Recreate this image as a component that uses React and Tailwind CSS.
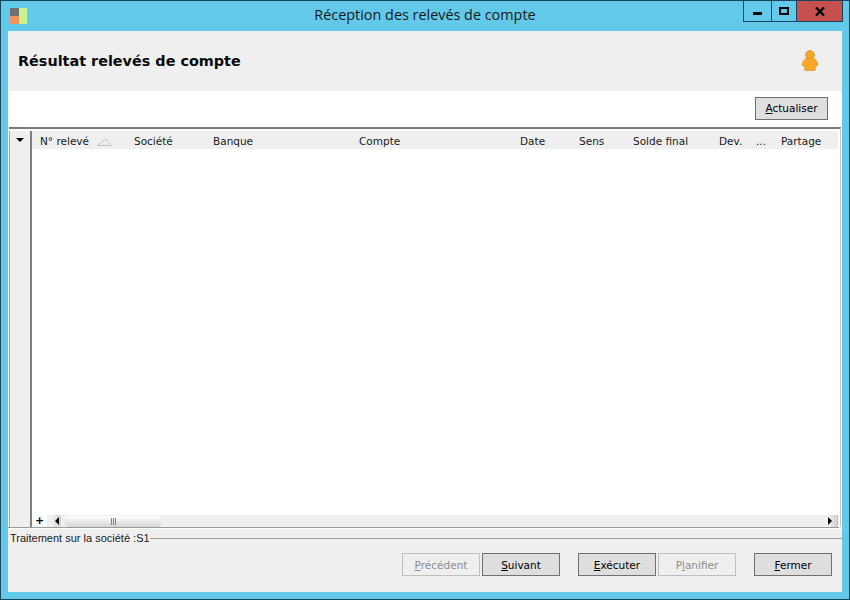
import React from "react";

const FONT = "font-['DejaVu_Sans',sans-serif]";

const columns = [
  { label: "Société", w: "w-[79px]" },
  { label: "Banque", w: "w-[146px]" },
  { label: "Compte", w: "w-[161px]" },
  { label: "Date", w: "w-[59px]" },
  { label: "Sens", w: "w-[54px]" },
  { label: "Solde final", w: "w-[86px]" },
  { label: "Dev.", w: "w-[37px]" },
  { label: "...", w: "w-[25px]" },
  { label: "Partage", w: "w-[56px]" },
];

// Underlined mnemonic letter on the dialog buttons
const WinButton = ({ before = "", first, rest, disabled, className = "" }) => (
  <button
    className={`h-[23px] w-[78px] border pt-[2px] text-[10.5px] ${
      disabled
        ? "border-[#bfbfbf] bg-[#efefef] text-[#8c8c8c]"
        : "border-[#707070] bg-[#dedede] text-black"
    } ${className}`}
  >
    {before}
    <span className="underline">{first}</span>
    {rest}
  </button>
);

const App = () => {
  return (
    <div className={`flex h-[600px] w-[850px] flex-col border border-[#17455c] bg-[#62c9ea] ${FONT}`}>
      {/* Title bar */}
      <div className="relative flex h-[30px] items-start justify-center pt-[4px]">
        <svg className="absolute left-[9px] top-[6px]" width="17" height="18" viewBox="0 0 17 18">
          <rect x="0" y="1" width="9" height="8" fill="#6f6f6f" />
          <rect x="0" y="9" width="9" height="8" fill="#f0935a" />
          <rect x="9" y="1" width="8" height="16" fill="#c9f28f" />
        </svg>
        <span className="font-['Open_Sans',sans-serif] text-[14.4px] leading-[20px] text-[#1a1a1a]">
          Réception des relevés de compte
        </span>
        <div className="absolute right-[6px] top-0 flex h-[21px] border-x border-b border-[#17455c]">
          <div className="flex w-[28px] items-center justify-center border-r border-[#17455c]">
            <div className="mt-[4px] h-[3px] w-[9px] bg-black" />
          </div>
          <div className="flex w-[25px] items-center justify-center border-r border-[#17455c]">
            <div className="h-[8px] w-[10px] border-2 border-black" />
          </div>
          <div className="flex w-[45px] items-center justify-center bg-[#c75050]">
            <svg width="10" height="9" viewBox="0 0 10 9">
              <path d="M1 0.5 L9 8.5 M9 0.5 L1 8.5" stroke="#000" strokeWidth="2.4" />
            </svg>
          </div>
        </div>
      </div>

      {/* Client area */}
      <div className="mx-[7px] flex h-[561px] flex-col bg-[#efefef]">
        <div className="flex h-[60px] items-center justify-between pl-[10px] pr-[23px]">
          <h1 className="pt-[2px] text-[14.4px] font-bold text-[#0a0a0a]">Résultat relevés de compte</h1>
          <svg className="mb-[2px]" width="18" height="21" viewBox="0 0 18 21">
            <circle cx="9" cy="5" r="4.5" fill="#f5a623" stroke="#d98a10" strokeWidth="0.6" />
            <path d="M4 9 Q9 7.5 14 9 Q17 12 17 15 L14.5 16.5 L14 20.5 L4 20.5 L3.5 16.5 L1 15 Q1 12 4 9 Z" fill="#f7a826" stroke="#d98a10" strokeWidth="0.6" />
          </svg>
        </div>

        <div className="flex h-[36px] items-start justify-end bg-white pr-[14px] pt-[6px]">
          <button className="h-[23px] w-[73px] border border-[#707070] bg-[#dedede] pt-px text-[10.5px] text-black">
            <span className="underline">A</span>ctualiser
          </button>
        </div>

        {/* Grid */}
        <div className="flex h-[400px] flex-col bg-white pl-px pr-px">
          <div className="flex h-full flex-col border-t-2 border-r border-[#7a7a7a] border-r-[#c8c8c8] bg-white pt-[2px]">
            <div className="flex min-h-0 flex-1">
              <div className="flex w-[23px] shrink-0 flex-col border-x border-r-2 border-l-[#a8a8a8] border-r-[#7f7f7f] bg-[#efefef]">
                <div className="flex h-[18px] items-center justify-center">
                  <div className="h-0 w-0 border-x-[4px] border-t-[4px] border-x-transparent border-t-black" />
                </div>
              </div>
              <div className="flex min-w-0 flex-1 flex-col">
                <div className="mr-[2px] flex h-[18px] items-center overflow-hidden bg-[#efefef] pl-[8px] pt-[4px] text-[10.5px] whitespace-nowrap text-[#1a1a1a]">
                  <div className="flex w-[94px] shrink-0 items-center">
                    N° relevé
                    <svg className="ml-[8px]" width="15" height="8" viewBox="0 0 15 8">
                      <path d="M0.5 7.5 H14.5 L8.5 1 Z" fill="none" stroke="#c4c4c4" />
                    </svg>
                  </div>
                  {columns.map((col) => (
                    <div key={col.label} className={`${col.w} shrink-0`}>
                      {col.label}
                    </div>
                  ))}
                </div>
                <div className="flex-1 bg-white" />
                {/* Bottom scroll row */}
                <div className="mr-[2px] flex h-[12px] items-center bg-[#efefef]">
                  <div className="flex h-full w-[15px] items-center justify-center bg-white text-[11px] font-bold text-black">+</div>
                  <div className="ml-[3px] flex h-full w-[11px] items-center justify-end bg-gradient-to-r from-[#f5f5f5] to-[#d2d2d2] pr-[2px]">
                    <div className="h-0 w-0 border-y-[4px] border-r-[4px] border-y-transparent border-r-black" />
                  </div>
                  <div className="ml-[3px] flex h-[11px] w-[98px] items-center justify-center gap-[1px] rounded-[5px] bg-gradient-to-b from-white to-[#d4d4d4]">
                    <div className="h-[7px] w-px bg-[#808080]" />
                    <div className="h-[7px] w-px bg-[#808080]" />
                    <div className="h-[7px] w-px bg-[#808080]" />
                  </div>
                  <div className="flex-1" />
                  <div className="flex h-full w-[11px] items-center justify-start border-r border-[#c0c0c0] bg-gradient-to-r from-[#f5f5f5] to-[#d2d2d2] pl-[1px]">
                    <div className="h-0 w-0 border-y-[4px] border-l-[4px] border-y-transparent border-l-black" />
                  </div>
                </div>
              </div>
            </div>
          </div>
        </div>
        <div className="flex h-[2px] flex-col bg-white">
          <div className="mr-[3px] h-px bg-[#9a9a9a]" />
        </div>

        {/* Bottom panel */}
        <div className="flex flex-1 flex-col">
          <div className="mt-[3px] flex items-center pl-[2px] font-['Liberation_Sans',sans-serif] text-[11px] leading-[13px] text-[#1a1a1a]">
            <span>Traitement sur la société :S1</span>
            <div className="h-px flex-1 bg-[#a0a0a0]" />
          </div>
          <div className="mt-[8px] flex justify-end pr-[10px]">
            <WinButton first="P" rest="récédent" disabled />
            <WinButton first="S" rest="uivant" className="ml-[2px]" />
            <WinButton first="E" rest="xécuter" className="ml-[18px]" />
            <WinButton before="P" first="l" rest="anifier" disabled className="ml-[2px]" />
            <WinButton first="F" rest="ermer" className="ml-[18px]" />
          </div>
        </div>
      </div>
    </div>
  );
};

export default App;
